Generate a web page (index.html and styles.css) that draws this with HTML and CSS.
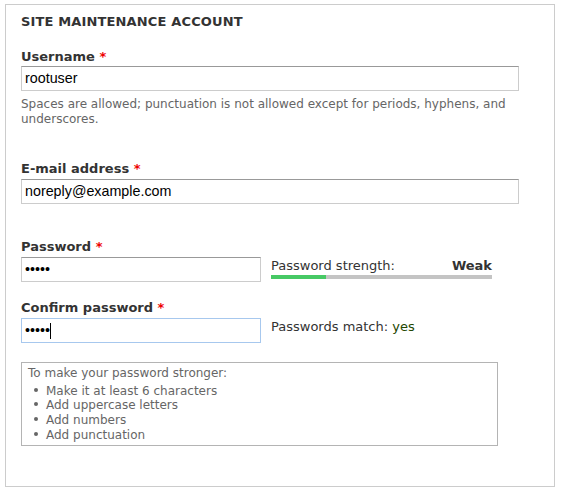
FILE: index.html
```html
<!DOCTYPE html>
<html lang="en">
<head>
<meta charset="utf-8">
<title>Site maintenance account</title>
<link rel="stylesheet" href="styles.css">
</head>
<body>
<div class="fieldset">
  <div class="legend">Site maintenance account</div>

  <div class="form-item item-user">
    <label class="label">Username <span class="req">*</span></label>
    <div class="input wide">rootuser</div>
    <div class="description">Spaces are allowed; punctuation is not allowed except for periods, hyphens, and underscores.</div>
  </div>

  <div class="form-item item-mail">
    <label class="label">E-mail address <span class="req">*</span></label>
    <div class="input wide">noreply@example.com</div>
  </div>

  <div class="form-item item-pass">
    <label class="label">Password <span class="req">*</span></label>
    <div class="row">
      <div class="input narrow"><span class="dots">•••••</span></div>
      <div class="strength">
        <div class="strength-head">
          <span class="strength-title">Password strength:</span>
          <span class="strength-text">Weak</span>
        </div>
        <div class="indicator"><div class="indicator-fill" style="width: 25%"></div></div>
      </div>
    </div>
  </div>

  <div class="form-item item-confirm">
    <label class="label">Confirm password <span class="req">*</span></label>
    <div class="row">
      <div class="input narrow focus"><span class="dots">•••••</span><span class="caret"></span></div>
      <div class="confirm">Passwords match: <span class="ok">yes</span></div>
    </div>
  </div>

  <div class="suggestions">
    <div class="sugg-title">To make your password stronger:</div>
    <ul class="sugg-list">
      <li>Make it at least 6 characters</li>
      <li>Add uppercase letters</li>
      <li>Add numbers</li>
      <li>Add punctuation</li>
    </ul>
  </div>
</div>
</body>
</html>
```

FILE: styles.css
```css
html, body {
  margin: 0;
  padding: 0;
  background: #fff;
}
body {
  font-family: "DejaVu Sans", Verdana, sans-serif;
  font-size: 13px;
  color: #333;
}
.fieldset {
  box-sizing: border-box;
  width: 550px;
  height: 483px;
  margin: 4px 0 0 5px;
  border: 1px solid #ccc;
  padding: 8px 15px 0 15px;
}
.legend {
  font-weight: bold;
  text-transform: uppercase;
  line-height: 17px;
  letter-spacing: 0.15px;
}
.form-item {
  display: flex;
  flex-direction: column;
  align-items: flex-start;
}
.item-user { margin-top: 18px; }
.item-mail { margin-top: 33px; }
.item-pass { margin-top: 34px; }
.item-confirm { margin-top: 17px; }
.label {
  display: block;
  font-weight: bold;
  line-height: 17px;
  margin-bottom: 2px;
}
.item-user .label {
  margin-bottom: 1px;
}
.req {
  color: #e00;
}
.input {
  box-sizing: border-box;
  height: 25px;
  border: 1px solid #ccc;
  border-top-color: #999;
  padding: 0 3px;
  font-family: "Liberation Sans", Arial, sans-serif;
  font-size: 14.3px;
  line-height: 23px;
  color: #000;
  display: flex;
  align-items: center;
}
.wide { width: 498px; }
.narrow { width: 240px; }
.focus {
  border-color: #a7c8ee;
}
.dots {
  font-size: 14.3px;
  letter-spacing: 0;
}
.caret {
  display: inline-block;
  width: 1px;
  height: 16px;
  background: #000;
}
.description {
  margin-top: 6px;
  font-size: 12px;
  line-height: 15px;
  color: #666;
}
.row {
  display: flex;
  align-items: flex-start;
}
.strength {
  width: 221px;
  margin-left: 10px;
}
.strength-head {
  display: flex;
  justify-content: space-between;
  line-height: 17px;
}
.strength-text {
  font-weight: bold;
}
.indicator {
  height: 4px;
  margin-top: 1px;
  background: #c4c4c4;
}
.indicator-fill {
  height: 100%;
  background: #47c965;
}
.confirm {
  margin-left: 10px;
  line-height: 17px;
}
.ok {
  color: #234600;
}
.suggestions {
  box-sizing: border-box;
  width: 477px;
  height: 84px;
  margin-top: 19px;
  border: 1px solid #b4b4b4;
  padding: 3px 6px 0 6px;
  font-size: 12px;
  line-height: 14.7px;
  color: #666;
}
.sugg-list {
  list-style: none;
  margin: 3px 0 0 0;
  padding: 0 0 0 18px;
}
.sugg-list li::before {
  content: "";
  display: inline-block;
  width: 4px;
  height: 4px;
  border-radius: 50%;
  background: #666;
  margin-left: -12px;
  margin-right: 8px;
  vertical-align: 3px;
}
```
